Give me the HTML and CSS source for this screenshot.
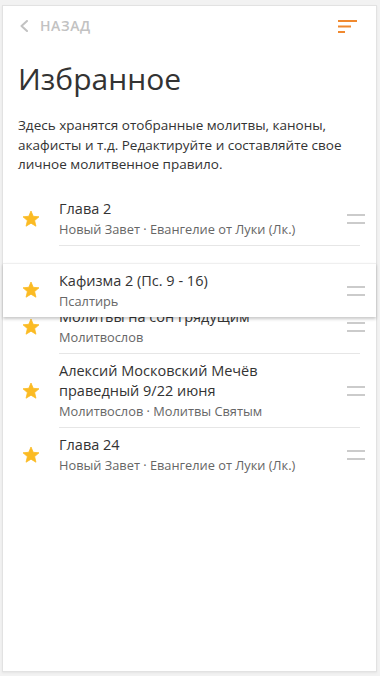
FILE: index.html
```html
<!DOCTYPE html>
<html lang="ru">
<head>
<meta charset="utf-8">
<title>Избранное</title>
<link rel="stylesheet" href="styles.css">
</head>
<body>
<div class="card">
  <header class="topbar">
    <a class="back" href="#">
      <svg class="chev" width="8" height="12" viewBox="0 0 8 12"><polyline points="7,1 1.5,6 7,11" fill="none" stroke="#c2c2c2" stroke-width="2" stroke-linecap="round" stroke-linejoin="round"/></svg>
      <span class="back-text">Назад</span>
    </a>
    <svg class="sort" width="20" height="13" viewBox="0 0 20 13">
      <rect x="0" y="0" width="19" height="2" fill="#f0892f"/>
      <rect x="0" y="5.5" width="13" height="2" fill="#f0892f"/>
      <rect x="0" y="11" width="7" height="2" fill="#f0892f"/>
    </svg>
  </header>

  <h1 class="title">Избранное</h1>
  <p class="intro">Здесь хранятся отобранные молитвы, каноны, акафисты и т.д. Редактируйте и составляйте свое личное молитвенное правило.</p>

  <div class="list">
    <div class="row">
      <svg class="star" viewBox="2 2 20 20"><path d="M12 17.27L18.18 21l-1.64-7.03L22 9.24l-7.19-.61L12 2 9.19 8.63 2 9.24l5.46 4.73L5.82 21z" fill="#fbbb24" stroke="#fbbb24" stroke-width="1" stroke-linejoin="round"/></svg>
      <div class="body">
        <div class="text">
          <div class="name">Глава 2</div>
          <div class="meta">Новый Завет · Евангелие от Луки (Лк.)</div>
        </div>
        <span class="handle"></span>
      </div>
    </div>

    <div class="row placeholder"></div>

    <div class="row">
      <svg class="star" viewBox="2 2 20 20"><path d="M12 17.27L18.18 21l-1.64-7.03L22 9.24l-7.19-.61L12 2 9.19 8.63 2 9.24l5.46 4.73L5.82 21z" fill="#fbbb24" stroke="#fbbb24" stroke-width="1" stroke-linejoin="round"/></svg>
      <div class="body">
        <div class="text">
          <div class="name">Молитвы на сон грядущим</div>
          <div class="meta">Молитвослов</div>
        </div>
        <span class="handle"></span>
      </div>
    </div>

    <div class="row">
      <svg class="star" viewBox="2 2 20 20"><path d="M12 17.27L18.18 21l-1.64-7.03L22 9.24l-7.19-.61L12 2 9.19 8.63 2 9.24l5.46 4.73L5.82 21z" fill="#fbbb24" stroke="#fbbb24" stroke-width="1" stroke-linejoin="round"/></svg>
      <div class="body">
        <div class="text">
          <div class="name">Алексий Московский Мечёв праведный 9/22 июня</div>
          <div class="meta">Молитвослов · Молитвы Святым</div>
        </div>
        <span class="handle"></span>
      </div>
    </div>

    <div class="row last">
      <svg class="star" viewBox="2 2 20 20"><path d="M12 17.27L18.18 21l-1.64-7.03L22 9.24l-7.19-.61L12 2 9.19 8.63 2 9.24l5.46 4.73L5.82 21z" fill="#fbbb24" stroke="#fbbb24" stroke-width="1" stroke-linejoin="round"/></svg>
      <div class="body">
        <div class="text">
          <div class="name">Глава 24</div>
          <div class="meta">Новый Завет · Евангелие от Луки (Лк.)</div>
        </div>
        <span class="handle"></span>
      </div>
    </div>

    <div class="row dragging">
      <svg class="star" viewBox="2 2 20 20"><path d="M12 17.27L18.18 21l-1.64-7.03L22 9.24l-7.19-.61L12 2 9.19 8.63 2 9.24l5.46 4.73L5.82 21z" fill="#fbbb24" stroke="#fbbb24" stroke-width="1" stroke-linejoin="round"/></svg>
      <div class="body">
        <div class="text">
          <div class="name">Кафизма 2 (Пс. 9 - 16)</div>
          <div class="meta">Псалтирь</div>
        </div>
        <span class="handle"></span>
      </div>
    </div>
  </div>
</div>
</body>
</html>
```

FILE: styles.css
```css
html, body {
  height: 100%;
}
body {
  margin: 0;
  padding: 5px 3px 4px 2px;
  box-sizing: border-box;
  background: #f2f2f2;
  font-family: "Open Sans", "Noto Sans", sans-serif;
  color: #333;
}
.card {
  height: 100%;
  box-sizing: border-box;
  background: #fff;
  border: 1px solid #e2e2e2;
  box-shadow: 0 1px 2px rgba(0,0,0,0.06);
}
.topbar {
  height: 40px;
  display: flex;
  align-items: center;
  justify-content: space-between;
  padding: 0 18px 0 17px;
}
.back {
  display: flex;
  align-items: center;
  gap: 12px;
  text-decoration: none;
}
.chev {
  display: block;
}
.back-text {
  font-size: 14px;
  font-weight: 600;
  letter-spacing: 0.6px;
  text-transform: uppercase;
  color: #c2c2c2;
  line-height: 20px;
}
.sort {
  display: block;
}
.title {
  margin: 13px 0 0;
  padding: 0 15px;
  font-size: 30px;
  font-weight: 400;
  line-height: 40px;
  color: #333;
}
.intro {
  margin: 17px 0 0;
  padding: 0 15px;
  font-size: 13.5px;
  line-height: 19.5px;
  color: #333;
}
.list {
  position: relative;
  margin-top: 17px;
}
.row {
  display: flex;
  align-items: center;
  padding-left: 20px;
  min-height: 54px;
  background: #fff;
}
.star {
  width: 16px;
  height: 16px;
  flex: none;
  margin-right: 20px;
}
.body {
  flex: 1;
  align-self: stretch;
  display: flex;
  align-items: center;
  border-bottom: 1px solid #e6e6e6;
  margin-right: 16px;
  padding: 7px 0 6px;
  box-sizing: border-box;
}
.last .body {
  border-bottom-color: transparent;
}
.text {
  flex: 1;
  min-width: 0;
  padding-right: 14px;
}
.name {
  font-size: 14.5px;
  line-height: 20px;
  color: #333;
}
.meta {
  font-size: 12.8px;
  line-height: 20px;
  color: #666;
}
.handle {
  flex: none;
  width: 18px;
  height: 6px;
  margin-right: -5px;
  border-top: 2px solid #cbcbcb;
  border-bottom: 2px solid #cbcbcb;
}
.placeholder {
  background: transparent;
}
.dragging {
  position: absolute;
  left: 0;
  right: 0;
  top: 71px;
  height: 54px;
  min-height: 0;
  box-sizing: border-box;
  border-top: 1px solid #efefef;
  box-shadow: 0 2px 3px rgba(0,0,0,0.22);
}
.dragging .body {
  border-bottom: none;
}
```
